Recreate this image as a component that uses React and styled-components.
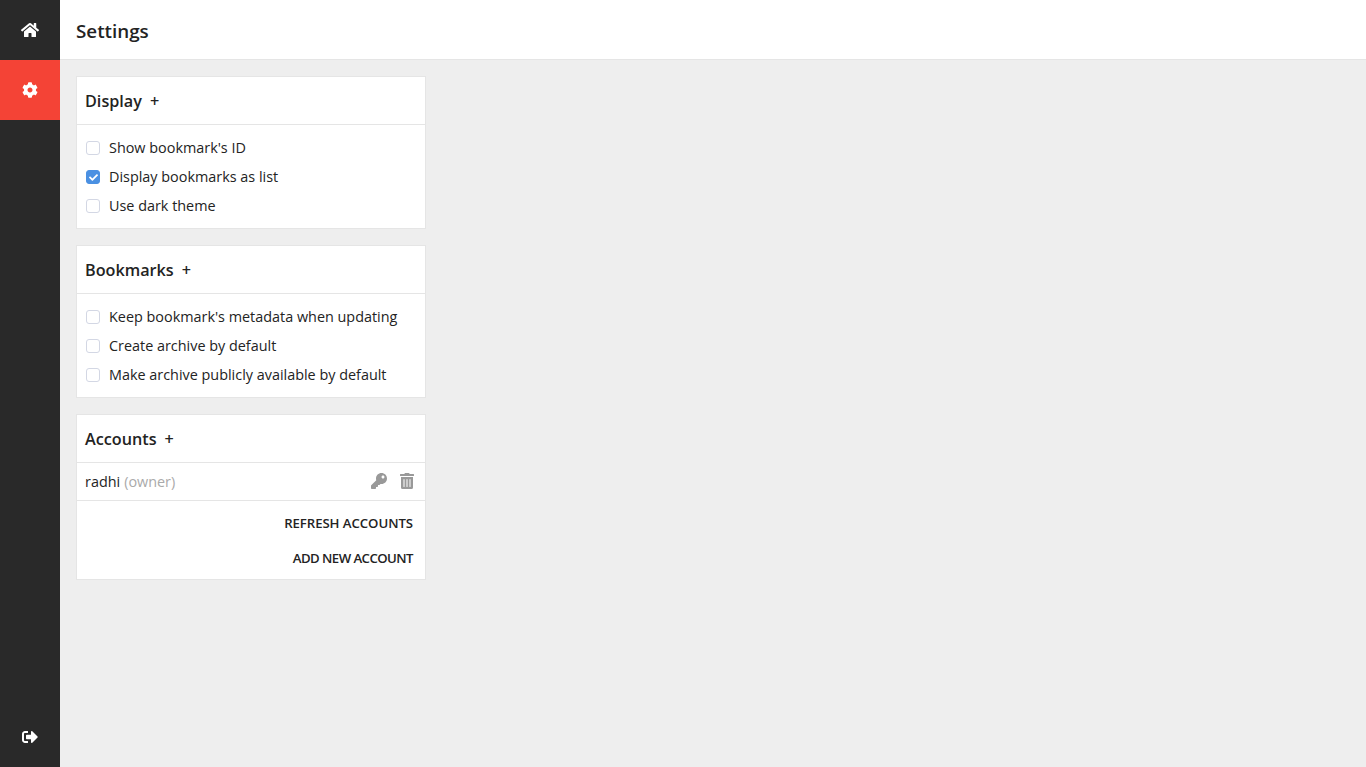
import React from "react";
import styled, { createGlobalStyle } from "styled-components";
import { FaHome, FaCog, FaSignOutAlt, FaKey, FaTrashAlt, FaCheck } from "react-icons/fa";

const Global = createGlobalStyle`
  html, body { margin: 0; padding: 0; height: 100%; }
  body { font-family: "Open Sans", "Noto Sans", sans-serif; font-size: 14.4px; color: #232323; background: #eee; }
  #root { height: 100%; }
  * { box-sizing: border-box; }
`;

const Page = styled.div`
  display: flex;
  height: 767px;
`;

const Sidebar = styled.nav`
  width: 60px;
  flex-shrink: 0;
  display: flex;
  flex-direction: column;
  background: #292929;
`;

const NavButton = styled.a`
  width: 60px;
  height: 60px;
  display: flex;
  align-items: center;
  justify-content: center;
  color: #fff;
  font-size: 16px;
  background: ${(p) => (p.$active ? "#f44336" : "transparent")};
  margin-top: ${(p) => (p.$bottom ? "auto" : "0")};
`;

const Main = styled.main`
  flex: 1;
  display: flex;
  flex-direction: column;
  min-width: 0;
`;

const Header = styled.header`
  height: 60px;
  display: flex;
  align-items: center;
  padding: 2px 16px 0;
  background: #fff;
  border-bottom: 1px solid #e5e5e5;
`;

const PageTitle = styled.h1`
  margin: 0;
  font-size: 18.8px;
  font-weight: 600;
`;

const Content = styled.div`
  display: flex;
  flex-direction: column;
  gap: 16px;
  padding: 16px;
  width: 382px;
`;

const Card = styled.section`
  background: #fff;
  border: 1px solid #e5e5e5;
`;

const CardTitle = styled.div`
  height: 48px;
  display: flex;
  align-items: center;
  gap: 8px;
  padding: 0 8px;
  font-size: 16.2px;
  font-weight: 600;
  border-bottom: 1px solid #e5e5e5;
`;

const Plus = styled.span`
  font-size: 16.2px;
  font-weight: 600;
`;

const CheckList = styled.div`
  padding: 8px;
`;

const CheckRow = styled.label`
  height: 29px;
  display: flex;
  align-items: center;
  gap: 9px;
`;

const Box = styled.span`
  width: 14px;
  height: 14px;
  margin: 1px 0 0 1px;
  display: flex;
  align-items: center;
  justify-content: center;
  border-radius: 3px;
  border: 1px solid ${(p) => (p.$checked ? "#4a90e2" : "#d3d7e4")};
  background: ${(p) => (p.$checked ? "#4a90e2" : "#fff")};
  color: #fff;
  font-size: 9px;
`;

const AccountRow = styled.div`
  height: 38px;
  display: flex;
  align-items: center;
  padding: 0 10px 0 8px;
  border-bottom: 1px solid #e5e5e5;
`;

const Owner = styled.span`
  color: #aaa;
  margin-left: 4px;
`;

const Actions = styled.div`
  margin: 0 0 2px auto;
  display: flex;
  align-items: center;
  gap: 12px;
  color: #999;
  font-size: 16px;
`;

const Footer = styled.div`
  padding: 4px 12px;
  display: flex;
  flex-direction: column;
  align-items: flex-end;
`;

const TextButton = styled.a`
  height: 35px;
  display: flex;
  align-items: center;
  font-size: 13.2px;
  font-weight: 600;
  text-transform: uppercase;
  letter-spacing: ${(p) => p.$spacing || "0"};
`;

const Check = ({ label, checked }) => (
  <CheckRow>
    <Box $checked={checked}>{checked && <FaCheck />}</Box>
    {label}
  </CheckRow>
);

const SectionTitle = ({ children }) => (
  <CardTitle>
    {children}
    <Plus>+</Plus>
  </CardTitle>
);

export default function App() {
  return (
    <Page>
      <Global />
      <Sidebar>
        <NavButton><FaHome size={18} /></NavButton>
        <NavButton $active><FaCog /></NavButton>
        <NavButton $bottom><FaSignOutAlt /></NavButton>
      </Sidebar>
      <Main>
        <Header><PageTitle>Settings</PageTitle></Header>
        <Content>
          <Card>
            <SectionTitle>Display</SectionTitle>
            <CheckList>
              <Check label="Show bookmark's ID" />
              <Check label="Display bookmarks as list" checked />
              <Check label="Use dark theme" />
            </CheckList>
          </Card>
          <Card>
            <SectionTitle>Bookmarks</SectionTitle>
            <CheckList>
              <Check label="Keep bookmark's metadata when updating" />
              <Check label="Create archive by default" />
              <Check label="Make archive publicly available by default" />
            </CheckList>
          </Card>
          <Card>
            <SectionTitle>Accounts</SectionTitle>
            <AccountRow>
              radhi<Owner>(owner)</Owner>
              <Actions><FaKey /><FaTrashAlt /></Actions>
            </AccountRow>
            <Footer>
              <TextButton $spacing="-0.06px">Refresh accounts</TextButton>
              <TextButton $spacing="-0.55px">Add new account</TextButton>
            </Footer>
          </Card>
        </Content>
      </Main>
    </Page>
  );
}
